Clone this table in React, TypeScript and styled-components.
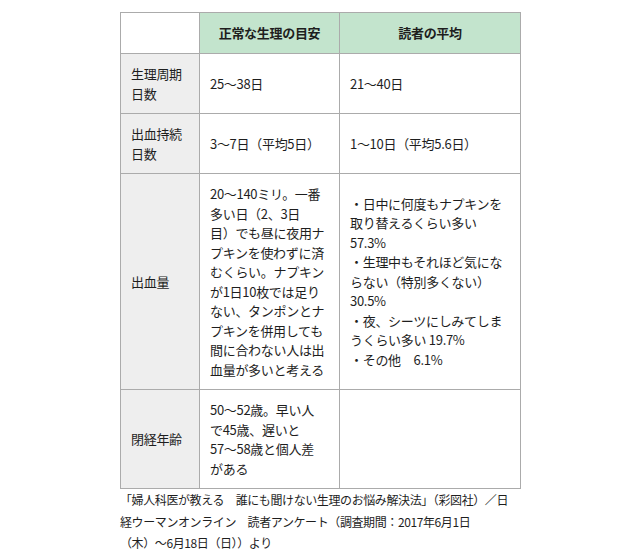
import React from 'react';
import styled, { createGlobalStyle } from 'styled-components';

const GlobalStyle = createGlobalStyle`
  html, body {
    margin: 0;
    padding: 0;
    background: #ffffff;
  }
  body {
    font-family: "Noto Sans CJK JP", "Noto Sans", sans-serif;
    color: #1e1e1e;
  }
`;

const Page = styled.div`
  width: 630px;
  height: 550px;
  padding: 12px 0 0 120px;
  box-sizing: border-box;
  overflow: hidden;
`;

const Table = styled.table`
  width: 400px;
  border-collapse: collapse;
  table-layout: fixed;
  font-size: 13px;
  line-height: 19.5px;
  letter-spacing: -0.3px;
`;

const HeadCell = styled.th<{ $blank?: boolean }>`
  height: 20px;
  padding: 10px 10px;
  border: 1px solid #ababab;
  background: ${(p) => (p.$blank ? '#ffffff' : '#c3e4cd')};
  font-weight: bold;
  text-align: center;
  vertical-align: middle;
`;

const Label = styled.th`
  padding: 10px 10px;
  border: 1px solid #ababab;
  background: #eeeeee;
  font-weight: normal;
  text-align: left;
  vertical-align: middle;
`;

const Cell = styled.td`
  padding: 10px 10px;
  border: 1px solid #ababab;
  background: #ffffff;
  text-align: left;
  vertical-align: middle;
  white-space: nowrap;
`;

const Caption = styled.p`
  margin: 0;
  font-size: 12px;
  line-height: 21.5px;
  letter-spacing: -0.4px;
  white-space: nowrap;
`;

const rows: { label: string[]; normal: string[]; reader: string[] }[] = [
  { label: ['生理周期', '日数'], normal: ['25～38日'], reader: ['21～40日'] },
  { label: ['出血持続', '日数'], normal: ['3～7日（平均5日）'], reader: ['1～10日（平均5.6日）'] },
  {
    label: ['出血量'],
    normal: [
      '20～140ミリ。一番',
      '多い日（2、3日',
      '目）でも昼に夜用ナ',
      'プキンを使わずに済',
      'むくらい。ナプキン',
      'が1日10枚では足り',
      'ない、タンポンとナ',
      'プキンを併用しても',
      '間に合わない人は出',
      '血量が多いと考える',
    ],
    reader: [
      '・日中に何度もナプキンを',
      '取り替えるくらい多い',
      '57.3%',
      '・生理中もそれほど気にな',
      'らない（特別多くない）',
      '30.5%',
      '・夜、シーツにしみてしま',
      'うくらい多い 19.7%',
      '・その他　6.1%',
    ],
  },
  {
    label: ['閉経年齢'],
    normal: ['50～52歳。早い人', 'で45歳、遅いと', '57～58歳と個人差', 'がある'],
    reader: [],
  },
];

const Lines = ({ lines }: { lines: string[] }) => (
  <>
    {lines.map((line, i) => (
      <React.Fragment key={i}>
        {i > 0 && <br />}
        {line}
      </React.Fragment>
    ))}
  </>
);

const App = () => {
  return (
    <>
      <GlobalStyle />
      <Page>
        <Table>
          <colgroup>
            <col style={{ width: 79 }} />
            <col style={{ width: 140 }} />
            <col style={{ width: 181 }} />
          </colgroup>
          <thead>
            <tr>
              <HeadCell $blank />
              <HeadCell>正常な生理の目安</HeadCell>
              <HeadCell>読者の平均</HeadCell>
            </tr>
          </thead>
          <tbody>
            {rows.map((row) => (
              <tr key={row.label.join('')}>
                <Label>
                  <Lines lines={row.label} />
                </Label>
                <Cell>
                  <Lines lines={row.normal} />
                </Cell>
                <Cell>
                  <Lines lines={row.reader} />
                </Cell>
              </tr>
            ))}
          </tbody>
        </Table>
        <Caption>
          「婦人科医が教える　誰にも聞けない生理のお悩み解決法」（彩図社）／日
          <br />
          経ウーマンオンライン　読者アンケート（調査期間：2017年6月1日
          <br />
          （木）～6月18日（日））より
        </Caption>
      </Page>
    </>
  );
};

export default App;
